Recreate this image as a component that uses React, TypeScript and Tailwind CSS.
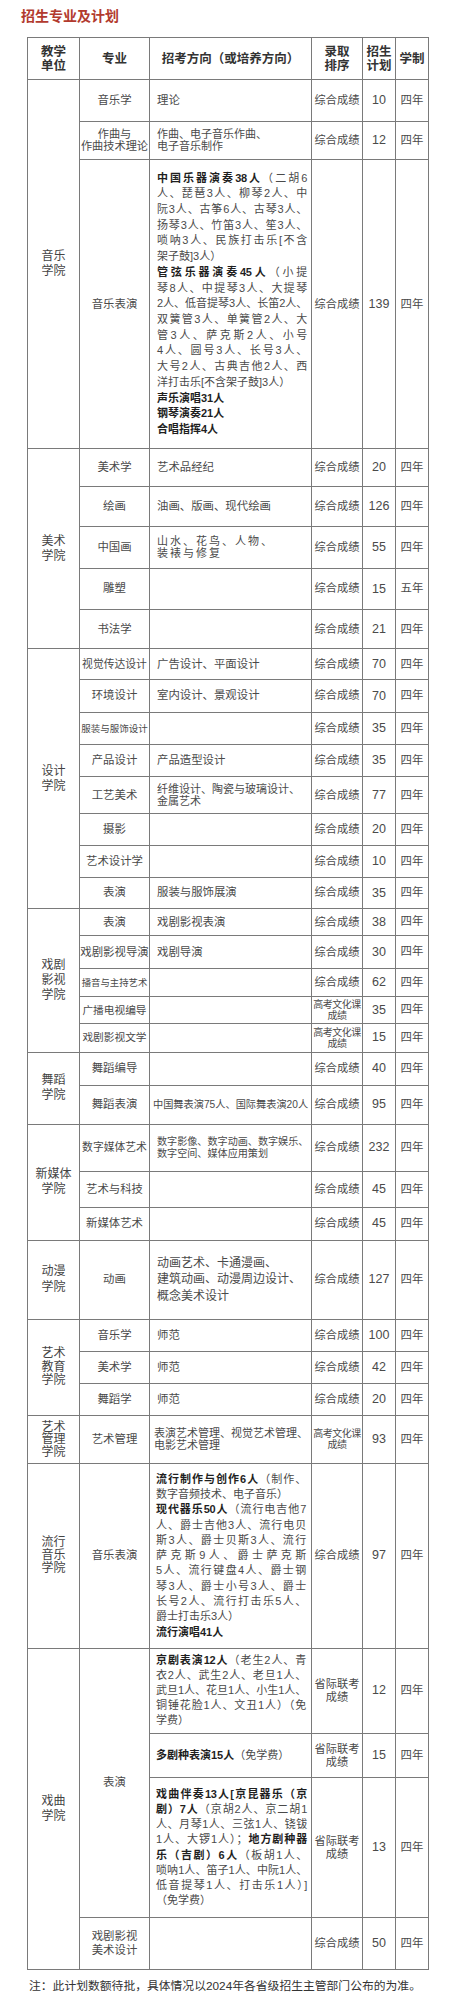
import type { ReactNode } from 'react';

const bd = 'border border-[#7a7a7a]';
const hd = `${bd} px-0 text-center align-middle text-[12.5px] font-bold leading-[14px] text-[#333]`;
const cCol = `${bd} px-0 text-center align-middle text-[12px] text-[#444]`;
const cMaj = `${bd} px-0 text-center align-middle whitespace-nowrap`;
const cDir = `${bd} text-left align-middle`;
const cRank = `${bd} px-0 text-center align-middle text-[11.2px] leading-[13px]`;
const cNum = `${bd} px-0 text-center align-middle text-[12.5px]`;
const cYr = `${bd} px-0 text-center align-middle text-[11.4px]`;

function B({ children }: { children: ReactNode }) {
  return <b className="font-bold text-[#1f1f1f]">{children}</b>;
}

// justified line
function J({ children }: { children: ReactNode }) {
  return <div className="text-justify tracking-[-0.3px] [text-align-last:justify]">{children}</div>;
}

function L({ children }: { children: ReactNode }) {
  return <div className="whitespace-nowrap">{children}</div>;
}

function College({ span, children, cls = 'leading-[15px]' }: { span: number; children: ReactNode; cls?: string }) {
  return (
    <td rowSpan={span} className={`${cCol} ${cls}`}>
      {children}
    </td>
  );
}

const GK = (
  <span className="block text-[10px] leading-[11px] tracking-[-0.5px]">
    高考文化课
    <br />
    成绩
  </span>
);

const SJ = (
  <span className="block leading-[12.7px]">
    省际联考
    <br />
    成绩
  </span>
);

type RowProps = {
  h: string;
  lead?: ReactNode;
  major?: ReactNode;
  majorSpan?: number;
  majorCls?: string;
  dir?: ReactNode;
  dirCls?: string;
  rank?: ReactNode;
  n: string;
  yr?: string;
};

function Row({
  h,
  lead,
  major,
  majorSpan,
  majorCls = 'text-[11.4px] leading-[13px]',
  dir,
  dirCls = 'pl-[7px] pr-[5px] text-[11.4px] leading-[13px]',
  rank = '综合成绩',
  n,
  yr = '四年',
}: RowProps) {
  return (
    <tr className={h}>
      {lead}
      {major !== undefined && (
        <td rowSpan={majorSpan} className={`${cMaj} ${majorCls}`}>
          {major}
        </td>
      )}
      <td className={`${cDir} ${dirCls}`}>{dir}</td>
      <td className={cRank}>{rank}</td>
      <td className={cNum}>{n}</td>
      <td className={cYr}>{yr}</td>
    </tr>
  );
}

export default function App() {
  return (
    <div className="min-h-[2000px] bg-white font-['Liberation_Sans','Noto_Sans_CJK_SC',sans-serif] text-[#4a4a4a]">
      <h1 className="pl-[21px] pt-[8px] text-[14px] font-bold leading-[16px] text-[#b23a2e]">招生专业及计划</h1>

      <table className="ml-[27px] mt-[13px] w-[401px] table-fixed border-collapse">
        <colgroup>
          <col className="w-[52px]" />
          <col className="w-[70px]" />
          <col className="w-[162px]" />
          <col className="w-[51px]" />
          <col className="w-[33px]" />
          <col className="w-[33px]" />
        </colgroup>
        <thead>
          <tr className="h-[42px]">
            <th className={hd}>
              教学
              <br />
              单位
            </th>
            <th className={hd}>专业</th>
            <th className={hd}>招考方向（或培养方向）</th>
            <th className={hd}>
              录取
              <br />
              排序
            </th>
            <th className={hd}>
              招生
              <br />
              计划
            </th>
            <th className={hd}>学制</th>
          </tr>
        </thead>
        <tbody>
          {/* 音乐学院 */}
          <Row
            h="h-[41.7px]"
            lead={
              <College span={3}>
                音乐
                <br />
                学院
              </College>
            }
            major="音乐学"
            dir="理论"
            n="10"
          />
          <Row
            h="h-[38.3px]"
            major={
              <>
                作曲与
                <br />
                作曲技术理论
              </>
            }
            majorCls="text-[11.2px] leading-[12.7px]"
            dir={
              <>
                作曲、电子音乐作曲、
                <br />
                电子音乐制作
              </>
            }
            dirCls="pl-[7px] pr-[5px] text-[11px] leading-[12.7px]"
            n="12"
          />
          <Row
            h="h-[289.3px]"
            major="音乐表演"
            dir={
              <>
                <J>
                  <B>中国乐器演奏38人</B>（二胡6
                </J>
                <J>人、琵琶3人、柳琴2人、中</J>
                <J>阮3人、古筝6人、古琴3人、</J>
                <J>扬琴3人、竹笛3人、笙3人、</J>
                <J>唢呐3人、民族打击乐[不含</J>
                <L>架子鼓]3人）</L>
                <J>
                  <B>管弦乐器演奏45人</B>（小提
                </J>
                <J>琴8人、中提琴3人、大提琴</J>
                <J>2人、低音提琴3人、长笛2人、</J>
                <J>双簧管3人、单簧管2人、大</J>
                <J>管3人、萨克斯2人、小号</J>
                <J>4人、圆号3人、长号3人、</J>
                <J>大号2人、古典吉他2人、西</J>
                <L>洋打击乐[不含架子鼓]3人）</L>
                <L>
                  <B>声乐演唱31人</B>
                </L>
                <L>
                  <B>钢琴演奏21人</B>
                </L>
                <L>
                  <B>合唱指挥4人</B>
                </L>
              </>
            }
            dirCls="pl-[7px] pr-[4px] text-[11px] leading-[15.7px]"
            n="139"
          />

          {/* 美术学院 */}
          <Row
            h="h-[37.4px]"
            lead={
              <College span={5}>
                美术
                <br />
                学院
              </College>
            }
            major="美术学"
            dir="艺术品经纪"
            n="20"
          />
          <Row h="h-[40.3px]" major="绘画" dir="油画、版画、现代绘画" n="126" />
          <Row
            h="h-[41.7px]"
            major="中国画"
            dir={
              <>
                山水、花鸟、人物、
                <br />
                装裱与修复
              </>
            }
            dirCls="pl-[7px] pr-[5px] text-[11px] leading-[12.7px] tracking-[2px]"
            n="55"
          />
          <Row h="h-[41.6px]" major="雕塑" n="15" yr="五年" />
          <Row h="h-[39px]" major="书法学" n="21" />

          {/* 设计学院 */}
          <Row
            h="h-[31px]"
            lead={
              <College span={8}>
                设计
                <br />
                学院
              </College>
            }
            major="视觉传达设计"
            majorCls="text-[10.8px] leading-[13px]"
            dir="广告设计、平面设计"
            n="70"
          />
          <Row h="h-[32.4px]" major="环境设计" dir="室内设计、景观设计" n="70" />
          <Row h="h-[32.3px]" major="服装与服饰设计" majorCls="text-[9.5px] leading-[13px]" n="35" />
          <Row h="h-[32px]" major="产品设计" dir="产品造型设计" n="35" />
          <Row
            h="h-[37.3px]"
            major="工艺美术"
            dir={
              <>
                纤维设计、陶瓷与玻璃设计、
                <br />
                金属艺术
              </>
            }
            dirCls="pl-[7px] pr-[4px] text-[11px] leading-[12.3px] whitespace-nowrap"
            n="77"
          />
          <Row h="h-[31.7px]" major="摄影" n="20" />
          <Row h="h-[31.7px]" major="艺术设计学" n="10" />
          <Row h="h-[31.6px]" major="表演" dir="服装与服饰展演" n="35" />

          {/* 戏剧影视学院 */}
          <Row
            h="h-[26.7px]"
            lead={
              <College span={5}>
                戏剧
                <br />
                影视
                <br />
                学院
              </College>
            }
            major="表演"
            dir="戏剧影视表演"
            n="38"
          />
          <Row h="h-[33.3px]" major="戏剧影视导演" dir="戏剧导演" n="30" />
          <Row h="h-[27.7px]" major="播音与主持艺术" majorCls="text-[9.4px] leading-[13px]" n="62" />
          <Row h="h-[27.3px]" major="广播电视编导" majorCls="text-[10.7px] leading-[13px]" rank={GK} n="35" />
          <Row h="h-[28.4px]" major="戏剧影视文学" majorCls="text-[10.7px] leading-[13px]" rank={GK} n="15" />

          {/* 舞蹈学院 */}
          <Row
            h="h-[33.3px]"
            lead={
              <College span={2} cls="leading-[15.5px]">
                舞蹈
                <br />
                学院
              </College>
            }
            major="舞蹈编导"
            n="40"
          />
          <Row
            h="h-[39px]"
            major="舞蹈表演"
            dir="中国舞表演75人、国际舞表演20人"
            dirCls="pl-[3px] pr-0 text-[10.2px] leading-[13px] whitespace-nowrap"
            n="95"
          />

          {/* 新媒体学院 */}
          <Row
            h="h-[47px]"
            lead={
              <College span={3}>
                新媒体
                <br />
                学院
              </College>
            }
            major="数字媒体艺术"
            majorCls="text-[10.8px] leading-[13px]"
            dir={
              <>
                数字影像、数字动画、数字娱乐、
                <br />
                数字空间、媒体应用策划
              </>
            }
            dirCls="pl-[7px] pr-0 text-[10.1px] leading-[12px] whitespace-nowrap"
            n="232"
          />
          <Row h="h-[35.7px]" major="艺术与科技" n="45" />
          <Row h="h-[33.3px]" major="新媒体艺术" n="45" />

          {/* 动漫学院 */}
          <Row
            h="h-[79px]"
            lead={
              <College span={1} cls="leading-[15.5px]">
                动漫
                <br />
                学院
              </College>
            }
            major="动画"
            dir={
              <>
                动画艺术、卡通漫画、
                <br />
                建筑动画、动漫周边设计、
                <br />
                概念美术设计
              </>
            }
            dirCls="pl-[7px] pr-[4px] text-[12px] leading-[16.7px] whitespace-nowrap"
            n="127"
          />

          {/* 艺术教育学院 */}
          <Row
            h="h-[32px]"
            lead={
              <College span={3} cls="leading-[13.3px]">
                艺术
                <br />
                教育
                <br />
                学院
              </College>
            }
            major="音乐学"
            dir="师范"
            n="100"
          />
          <Row h="h-[32.3px]" major="美术学" dir="师范" n="42" />
          <Row h="h-[31.7px]" major="舞蹈学" dir="师范" n="20" />

          {/* 艺术管理学院 */}
          <Row
            h="h-[48.3px]"
            lead={
              <College span={1} cls="leading-[12.5px]">
                艺术
                <br />
                管理
                <br />
                学院
              </College>
            }
            major="艺术管理"
            dir={
              <>
                表演艺术管理、视觉艺术管理、
                <br />
                电影艺术管理
              </>
            }
            dirCls="pl-[4px] pr-0 text-[11px] leading-[12.7px] whitespace-nowrap"
            rank={GK}
            n="93"
          />

          {/* 流行音乐学院 */}
          <Row
            h="h-[184.4px]"
            lead={
              <College span={1} cls="leading-[13px]">
                流行
                <br />
                音乐
                <br />
                学院
              </College>
            }
            major="音乐表演"
            dir={
              <>
                <J>
                  <B>流行制作与创作6人</B>（制作、
                </J>
                <L>数字音频技术、电子音乐）</L>
                <J>
                  <B>现代器乐50人</B>（流行电吉他7
                </J>
                <J>人、爵士吉他3人、流行电贝</J>
                <J>斯3人、爵士贝斯3人、流行</J>
                <J>萨克斯9人、爵士萨克斯</J>
                <J>5人、流行键盘4人、爵士钢</J>
                <J>琴3人、爵士小号3人、爵士</J>
                <J>长号2人、流行打击乐5人、</J>
                <L>爵士打击乐3人）</L>
                <L>
                  <B>流行演唱41人</B>
                </L>
              </>
            }
            dirCls="pl-[6px] pr-[5px] text-[11px] leading-[15.3px]"
            n="97"
          />

          {/* 戏曲学院 */}
          <Row
            h="h-[85.6px]"
            lead={
              <College span={4}>
                戏曲
                <br />
                学院
              </College>
            }
            major="表演"
            majorSpan={3}
            dir={
              <>
                <J>
                  <B>京剧表演12人</B>（老生2人、青
                </J>
                <J>衣2人、武生2人、老旦1人、</J>
                <J>武旦1人、花旦1人、小生1人、</J>
                <J>铜锤花脸1人、文丑1人）（免</J>
                <L>学费）</L>
              </>
            }
            dirCls="pl-[6px] pr-[5px] text-[11px] leading-[15px]"
            rank={SJ}
            n="12"
          />
          <Row
            h="h-[44px]"
            dir={
              <L>
                <B>多剧种表演15人</B>（免学费）
              </L>
            }
            dirCls="pl-[6px] pr-[5px] text-[11px] leading-[15px]"
            rank={SJ}
            n="15"
          />
          <Row
            h="h-[140px]"
            dir={
              <>
                <J>
                  <B>戏曲伴奏13人[京昆器乐（京</B>
                </J>
                <J>
                  <B>剧）7人</B>（京胡2人、京二胡1
                </J>
                <J>人、月琴1人、三弦1人、铙钹</J>
                <J>
                  1人、大锣1人）；<B>地方剧种器</B>
                </J>
                <J>
                  <B>乐（吉剧）6人</B>（板胡1人、
                </J>
                <J>唢呐1人、笛子1人、中阮1人、</J>
                <J>低音提琴1人、打击乐1人）]</J>
                <L>（免学费）</L>
              </>
            }
            dirCls="pl-[6px] pr-[4px] text-[11px] leading-[15.2px]"
            rank={SJ}
            n="13"
          />
          <Row
            h="h-[52px]"
            major={
              <>
                戏剧影视
                <br />
                美术设计
              </>
            }
            majorCls="text-[11.4px] leading-[13.7px]"
            n="50"
          />
        </tbody>
      </table>

      <p className="ml-[29px] mt-[9px] whitespace-nowrap text-[11.8px] leading-[14px] text-[#333]">
        注：此计划数额待批，具体情况以2024年各省级招生主管部门公布的为准。
      </p>
    </div>
  );
}
